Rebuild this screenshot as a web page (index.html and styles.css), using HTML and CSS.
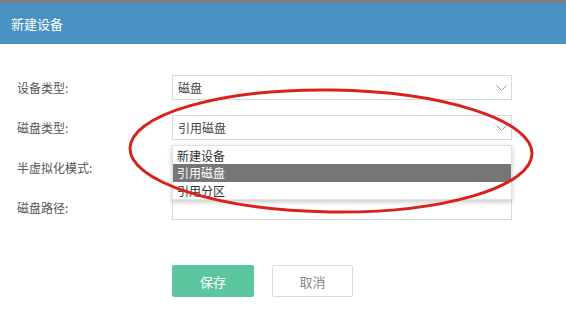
FILE: index.html
```html
<!DOCTYPE html>
<html lang="zh">
<head>
<meta charset="utf-8">
<link rel="stylesheet" href="styles.css">
</head>
<body>
<div class="dialog">
  <div class="topbar"></div>
  <header class="header">新建设备</header>
  <form class="form">
    <div class="row">
      <label class="label">设备类型:</label>
      <div class="select"><span>磁盘</span><svg class="chev" viewBox="0 0 11 6" width="11" height="6"><path d="M0.5 0.5 L5.5 5.5 L10.5 0.5" fill="none" stroke="#9a9a9a" stroke-width="1"/></svg></div>
    </div>
    <div class="row row-open">
      <label class="label">磁盘类型:</label>
      <div class="select"><span>引用磁盘</span><svg class="chev" viewBox="0 0 11 6" width="11" height="6"><path d="M0.5 0.5 L5.5 5.5 L10.5 0.5" fill="none" stroke="#9a9a9a" stroke-width="1"/></svg></div>
      <ul class="menu">
        <li>新建设备</li>
        <li class="active">引用磁盘</li>
        <li>引用分区</li>
      </ul>
    </div>
    <div class="row">
      <label class="label">半虚拟化模式:</label>
      <div class="select"></div>
    </div>
    <div class="row">
      <label class="label">磁盘路径:</label>
      <div class="input"></div>
    </div>
    <div class="actions">
      <button type="button" class="btn btn-save">保存</button>
      <button type="button" class="btn btn-cancel">取消</button>
    </div>
  </form>
  <svg class="annot" width="566" height="309" viewBox="0 0 566 309">
    <ellipse cx="331" cy="151" rx="201" ry="61" fill="none" stroke="#d8221c" stroke-width="3" transform="rotate(0.8 331 151)"/>
  </svg>
</div>
</body>
</html>
```

FILE: styles.css
```css
* { box-sizing: border-box; }
html, body { margin: 0; padding: 0; background: #fff; }
body {
  font-family: "Noto Sans CJK SC", "Noto Sans", sans-serif;
  width: 566px;
  height: 309px;
  overflow: hidden;
}
.dialog { position: relative; width: 566px; height: 309px; }
.topbar { height: 3px; background: #7b7d7f; }
.header {
  height: 41px;
  background: #4b92c4;
  color: #fff;
  font-size: 13px;
  line-height: 41px;
  padding-left: 11px;
}
.form {
  display: flex;
  flex-direction: column;
  gap: 15px;
  padding-top: 31px;
}
.row {
  position: relative;
  display: flex;
  align-items: center;
  height: 25px;
}
.label {
  width: 172px;
  padding-left: 17px;
  font-size: 12px;
  color: #555;
}
.select, .input {
  width: 340px;
  height: 25px;
  border: 1px solid #d9d9d9;
  background: #fff;
  display: flex;
  align-items: center;
  justify-content: space-between;
  padding: 0 4px 0 5px;
  font-size: 12px;
  color: #444;
}
.chev { display: block; margin-top: 1px; }
.menu {
  position: absolute;
  left: 172px;
  top: 30px;
  width: 340px;
  margin: 0;
  padding: 1px 0 0;
  list-style: none;
  background: #fff;
  border: 1px solid #e2e2e2;
  box-shadow: 0 2px 5px rgba(0,0,0,0.22);
  z-index: 2;
}
.menu li {
  height: 17px;
  line-height: 17px;
  padding-left: 4px;
  font-size: 12px;
  color: #333;
}
.menu li.active { background: #767676; color: #fff; height: 18px; line-height: 18px; }
.actions {
  display: flex;
  gap: 18px;
  padding-left: 172px;
  margin-top: 30px;
}
.btn {
  height: 32px;
  font-family: inherit;
  font-size: 13px;
  border-radius: 2px;
  padding: 0;
}
.btn-save {
  width: 82px;
  background: #5cc79e;
  border: none;
  color: #fff;
}
.btn-cancel {
  width: 81px;
  background: #fff;
  border: 1px solid #dcdcdc;
  color: #888;
}
.annot {
  position: absolute;
  left: 0;
  top: 0;
  pointer-events: none;
  z-index: 5;
}
```
